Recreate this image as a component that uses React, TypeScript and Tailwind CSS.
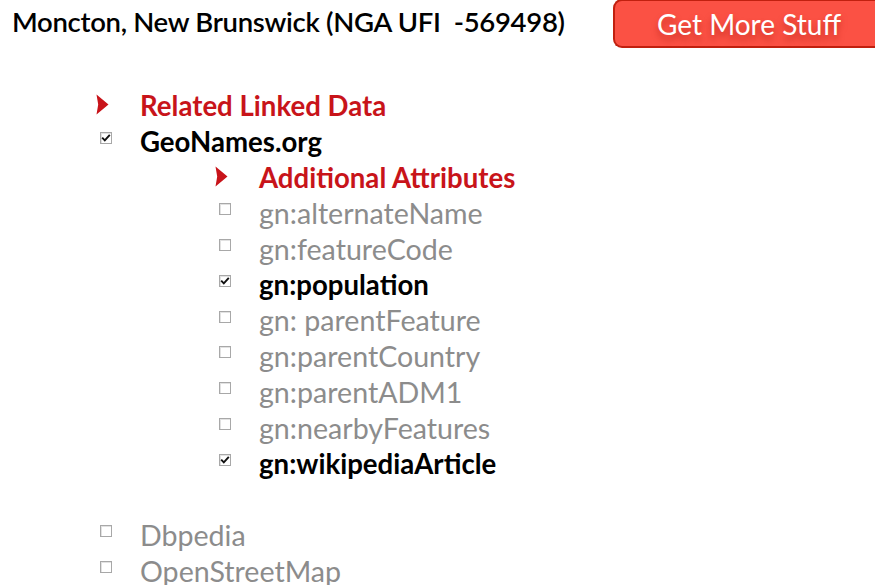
import React from 'react'

type Item = { label: string; checked?: boolean }

const attributes: Item[] = [
  { label: 'gn:alternateName' },
  { label: 'gn:featureCode' },
  { label: 'gn:population', checked: true },
  { label: 'gn: parentFeature' },
  { label: 'gn:parentCountry' },
  { label: 'gn:parentADM1' },
  { label: 'gn:nearbyFeatures' },
  { label: 'gn:wikipediaArticle', checked: true },
]

const font = { fontFamily: 'Lato, "Open Sans", sans-serif' }

// ─── small pieces ─────────────────────────────────────────────────────────────

function Arrow() {
  return (
    <svg width="13" height="21" viewBox="0 0 13 21" className="shrink-0 -translate-y-[1px]">
      <path d="M0.5 0.5 L12.5 10.5 L0.5 20.5 L2.2 10.5 Z" fill="#c8141a" />
    </svg>
  )
}

function Box({ checked }: { checked?: boolean }) {
  return (
    <span className="ml-[4px] w-[12px] h-[12px] border border-[#a8a8a8] bg-white flex items-center justify-center shrink-0 -translate-y-[4px] shadow-[inset_1px_1px_0_#e2e2e2]">
      {checked && (
        <svg width="10" height="10" viewBox="0 0 10 10">
          <path d="M1.2 4.6 L3.8 7.4 L8.8 1.8" fill="none" stroke="#111" strokeWidth="1.9" />
        </svg>
      )}
    </span>
  )
}

function Row({ indent, icon, children }: { indent: 'one' | 'two'; icon: React.ReactNode; children: React.ReactNode }) {
  return (
    <div className={`flex items-center h-[35.8px] ${indent === 'one' ? 'pl-[96px]' : 'pl-[215px]'}`}>
      <span className="w-[44px] flex items-center">{icon}</span>
      {children}
    </div>
  )
}

const bold = 'font-bold text-[27.6px]'
const plain = 'text-[28.6px] text-[#8c8c8c]'

// ─── page ─────────────────────────────────────────────────────────────────────

export default function App() {
  return (
    <div className="w-[875px] h-[585px] bg-white overflow-hidden" style={font}>
      {/* title + action button */}
      <div className="flex items-start h-[88px]">
        <h1 className="pl-[12px] pt-[4px] text-[27.5px] leading-[36px] text-black font-semibold tracking-[-0.3px]">
          Moncton, New Brunswick (NGA UFI&nbsp; -569498)
        </h1>
        <button
          type="button"
          className="ml-auto w-[262px] h-[49px] -mt-[1px] rounded-l-[9px] border-2 border-r-0 border-[#c1200f] bg-[#fb5144] text-white text-[28px] leading-none pl-[8px] [text-shadow:0_5px_6px_rgba(170,25,15,0.55)]"
        >
          Get More Stuff
        </button>
      </div>

      <div className="leading-none">
        <Row indent="one" icon={<Arrow />}>
          <span className={`${bold} text-[#c8141a]`}>Related Linked Data</span>
        </Row>
        <Row indent="one" icon={<Box checked />}>
          <span className={`${bold} text-black`}>GeoNames.org</span>
        </Row>
        <Row indent="two" icon={<Arrow />}>
          <span className={`${bold} text-[#c8141a]`}>Additional Attributes</span>
        </Row>
        {attributes.map((a) => (
          <Row key={a.label} indent="two" icon={<Box checked={a.checked} />}>
            <span className={a.checked ? `${bold} text-black` : plain}>{a.label}</span>
          </Row>
        ))}
        <div className="h-[35.8px]" />
        <Row indent="one" icon={<Box />}>
          <span className={plain}>Dbpedia</span>
        </Row>
        <Row indent="one" icon={<Box />}>
          <span className={plain}>OpenStreetMap</span>
        </Row>
      </div>
    </div>
  )
}
